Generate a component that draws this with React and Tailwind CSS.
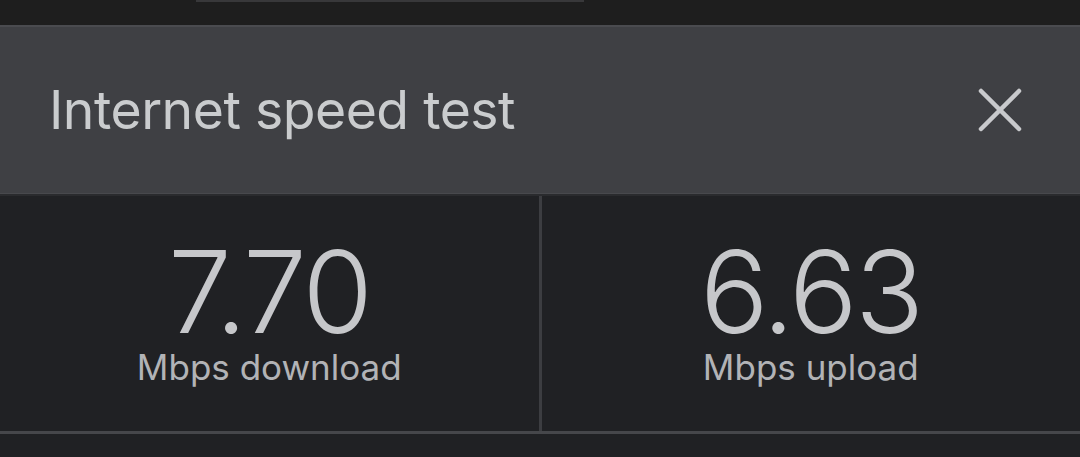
import React from 'react';

const Stat = ({ value, label }) => (
    <div className="flex-1 flex flex-col items-center pt-[51px]">
        <div className="text-[114px] leading-[90px] font-light tracking-[-2.5px] text-[#c6c7ca]">{value}</div>
        <div className="text-[35px] leading-[36px] text-[#b2b3b6] mt-[12px]">{label}</div>
    </div>
);

export default function App() {
    return (
        <div className="w-full h-[457px] bg-[#202124] flex flex-col font-['Inter',sans-serif] overflow-hidden">
            <div className="h-[25px] bg-[#1e1e1e] pl-[196px]">
                <div className="w-[388px] h-[2px] bg-[#38383a]" />
            </div>

            <div className="h-[168px] bg-[#3f4044] border-t-[2px] border-[#4a4b4f] flex items-center justify-between pl-[49px] pr-[58px]">
                <h1 className="text-[53.5px] leading-none font-normal text-[#caccce] tracking-[-0.5px]">Internet speed test</h1>
                <svg width="44" height="44" viewBox="0 0 44 44" fill="none" stroke="#c9cacd" strokeWidth="4.5" strokeLinecap="round">
                    <path d="M3 3 L41 41 M41 3 L3 41" />
                </svg>
            </div>

            <div className="h-[3px] bg-[#2a2b2e] border-t border-[#48494d]" />

            <div className="flex h-[235px]">
                <Stat value="7.70" label="Mbps download" />
                <div className="w-[3px] bg-[#3c3d41]" />
                <Stat value="6.63" label="Mbps upload" />
            </div>

            <div className="h-[3px] bg-[#46474b]" />
        </div>
    );
}
